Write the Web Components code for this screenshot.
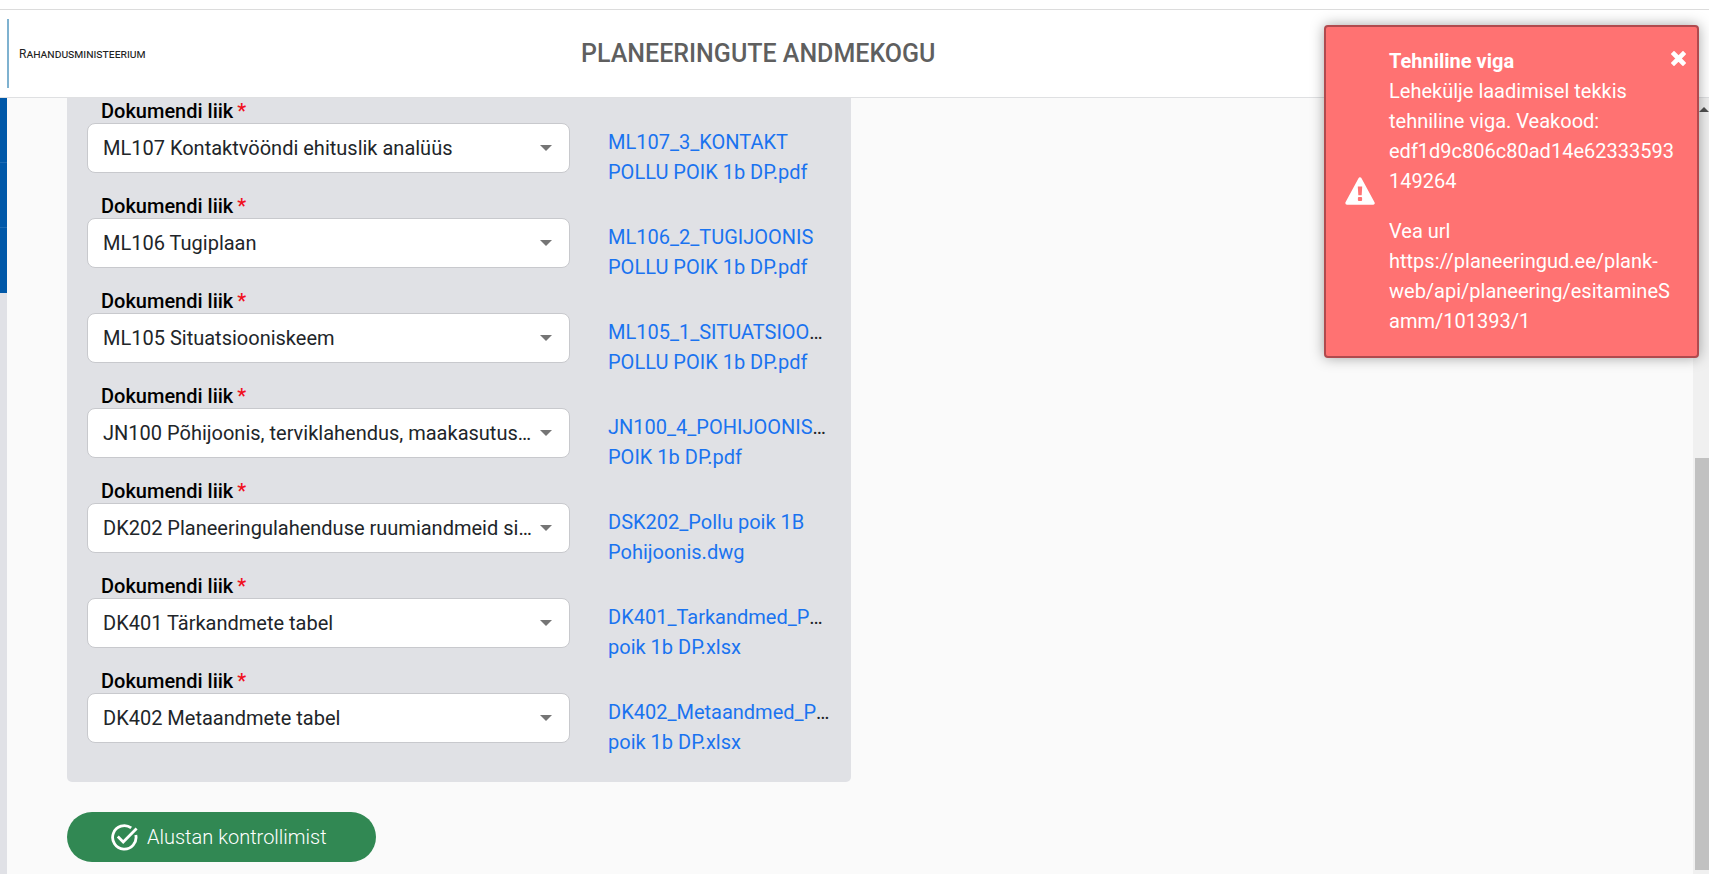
<!DOCTYPE html>
<html lang="et">
<head>
<meta charset="utf-8">
<title>Planeeringute andmekogu</title>
<style>
    html, body {
        height: 100%;
        margin: 0;
    }

    body {
        font: 400 20px/30px Roboto, sans-serif;
        color: #212529;
        background: #fafafa;
        overflow: hidden;
    }
</style>
</head>
<body>
<plank-app>
    <plank-header slot="header" ministry="Rahandusministeerium">Planeeringute andmekogu</plank-header>
    <side-menu slot="menu"></side-menu>
    <document-panel>
        <document-row value="ML107 Kontaktvööndi ehituslik analüüs" file="ML107_3_KONTAKT POLLU POIK 1b DP.pdf"></document-row>
        <document-row value="ML106 Tugiplaan" file="ML106_2_TUGIJOONIS POLLU POIK 1b DP.pdf"></document-row>
        <document-row value="ML105 Situatsiooniskeem" file="ML105_1_SITUATSIOONISKEEM POLLU POIK 1b DP.pdf"></document-row>
        <document-row value="JN100 Põhijoonis, terviklahendus, maakasutusplaan" file="JN100_4_POHIJOONIS_POLLU POIK 1b DP.pdf"></document-row>
        <document-row value="DK202 Planeeringulahenduse ruumiandmeid sisaldav fail" file="DSK202_Pollu poik 1B Pohijoonis.dwg"></document-row>
        <document-row value="DK401 Tärkandmete tabel" file="DK401_Tarkandmed_Pollu poik 1b DP.xlsx"></document-row>
        <document-row value="DK402 Metaandmete tabel" file="DK402_Metaandmed_Pollu poik 1b DP.xlsx"></document-row>
    </document-panel>
    <check-button>Alustan kontrollimist</check-button>
    <scroll-track slot="scroll"></scroll-track>
    <error-toast slot="toast" heading="Tehniline viga">
        <p>Lehekülje laadimisel tekkis tehniline viga. Veakood: edf1d9c806c80ad14e62333593149264</p>
        <p>Vea url<br>https://planeeringud.ee/plank-web/api/planeering/esitamineSamm/101393/1</p>
    </error-toast>
</plank-app>

<script>
class BaseElement extends HTMLElement {
    constructor() {
        super();
        this.shadow = this.attachShadow({ mode: 'open' });
        const template = document.createElement('template');
        template.innerHTML = this.constructor.markup;
        this.shadow.appendChild(template.content.cloneNode(true));
    }
}

class PlankApp extends BaseElement {
    static markup = `
        <style>
            :host {
                display: flex;
                flex-direction: column;
                height: 100vh;
            }

            .body {
                display: flex;
                flex: 1;
                min-height: 0;
            }

            main {
                flex: 1;
                min-width: 0;
                padding: 0 60px;
                overflow: hidden;
            }
        </style>
        <slot name="header"></slot>
        <div class="body">
            <slot name="menu"></slot>
            <main><slot></slot></main>
            <slot name="scroll"></slot>
        </div>
        <slot name="toast"></slot>
    `;
}

class PlankHeader extends BaseElement {
    static markup = `
        <style>
            :host {
                display: block;
                padding-top: 9px;
                background: #fff;
            }

            header {
                display: grid;
                grid-template-columns: 34% 1fr;
                align-items: center;
                height: 87px;
                border-top: 1px solid #dcdcdc;
                border-bottom: 1px solid #dfe0e2;
            }

            .logo {
                display: flex;
                align-items: center;
                height: 69px;
                margin-left: 7px;
                padding-left: 10px;
                border-left: 2px solid #7fb2d0;
                box-sizing: border-box;
                color: #222;
                font-size: 12px;
                font-variant: small-caps;
            }

            h1 {
                margin: 0;
                color: #5f5f5f;
                font-size: 25px;
                font-weight: 500;
                text-transform: uppercase;
            }
        </style>
        <header>
            <div class="logo"></div>
            <h1><slot></slot></h1>
        </header>
    `;

    connectedCallback() {
        this.shadow.querySelector('.logo').textContent = this.getAttribute('ministry');
    }
}

class SideMenu extends BaseElement {
    static markup = `
        <style>
            :host {
                width: 7px;
                background: #e0e1e6;
            }

            .item {
                height: 65px;
                background: #0058a8;
                border-bottom: 1px solid #1c6ab2;
                box-sizing: border-box;
            }

            .item:last-child {
                border-bottom: none;
            }
        </style>
        <div class="item"></div>
        <div class="item"></div>
        <div class="item"></div>
    `;
}

class DocumentPanel extends BaseElement {
    static markup = `
        <style>
            :host {
                display: block;
                max-width: 784px;
                padding: 1px 20px 18px;
                box-sizing: border-box;
                background: #e0e1e5;
                border-radius: 0 0 5px 5px;
            }
        </style>
        <slot></slot>
    `;
}

class DocumentRow extends BaseElement {
    static markup = `
        <style>
            :host {
                display: grid;
                grid-template-columns: minmax(0, 1fr) 223px;
                column-gap: 38px;
                height: 95px;
            }

            label {
                display: block;
                padding-left: 14px;
                color: #000;
                font-weight: 500;
                line-height: 24px;
            }

            label span {
                margin-left: 4px;
                color: #f01020;
            }

            .field {
                display: grid;
                align-items: center;
            }

            select, svg {
                grid-area: 1 / 1;
            }

            select {
                width: 100%;
                height: 50px;
                margin: 0;
                padding: 0 37px 0 15px;
                appearance: none;
                background: #fff;
                border: 1px solid #c8c9cd;
                border-radius: 8px;
                color: #212529;
                font: inherit;
                text-overflow: ellipsis;
            }

            svg {
                justify-self: end;
                width: 12px;
                height: 6px;
                margin-right: 18px;
                pointer-events: none;
            }

            .file {
                padding-top: 28px;
                overflow: hidden;
                text-overflow: ellipsis;
            }

            a {
                color: #1a73f0;
                text-decoration: none;
            }
        </style>
        <div>
            <label for="type">Dokumendi liik<span>*</span></label>
            <div class="field">
                <select id="type" required><option></option></select>
                <svg viewBox="0 0 12 6"><path d="M0 0h12L6 6z" fill="#757575"/></svg>
            </div>
        </div>
        <div class="file"><a href="#"></a></div>
    `;

    connectedCallback() {
        this.shadow.querySelector('option').textContent = this.getAttribute('value');
        this.shadow.querySelector('a').textContent = this.getAttribute('file');
    }
}

class CheckButton extends BaseElement {
    static markup = `
        <style>
            :host {
                display: block;
                margin-top: 30px;
            }

            button {
                display: flex;
                align-items: center;
                gap: 9px;
                height: 50px;
                padding: 0 49px 0 44px;
                background: #318853;
                border: none;
                border-radius: 25px;
                color: #fff;
                font: inherit;
                font-weight: 300;
                cursor: pointer;
            }

            svg {
                width: 27px;
                height: 27px;
            }
        </style>
        <button type="button">
            <svg viewBox="0 0 27 27" fill="none" stroke="#fff" stroke-width="2.8">
                <path d="M20.2 3.9A11.7 11.7 0 1 0 24.8 11"/>
                <path d="M6.8 12.5l5.4 5.4L25.6 4.5"/>
            </svg>
            <slot></slot>
        </button>
    `;
}

class ScrollTrack extends BaseElement {
    static markup = `
        <style>
            :host {
                display: flex;
                flex-direction: column;
                align-items: flex-end;
                width: 16px;
                background: #f0f0f0;
            }

            svg {
                width: 10px;
                height: 5px;
                margin: 9px 0;
            }

            .rest {
                flex: 337;
            }

            .thumb {
                flex: 412;
                width: 14px;
                margin-bottom: 4px;
                background: #c1c1c1;
            }
        </style>
        <svg viewBox="0 0 10 5"><path d="M0 5l5-5 5 5z" fill="#505050"/></svg>
        <div class="rest"></div>
        <div class="thumb"></div>
    `;
}

class ErrorToast extends BaseElement {
    static markup = `
        <style>
            :host {
                position: absolute;
                top: 25px;
                right: 10px;
                display: flex;
                align-items: center;
                gap: 14px;
                width: 375px;
                padding: 19px 20px 20px 19px;
                box-sizing: border-box;
                background: #ff7272;
                border: 2px solid #b04a4e;
                border-radius: 4px;
                box-shadow: 0 0 14px rgba(0, 0, 0, 0.35);
                color: #fff;
            }

            .warning {
                flex: none;
                width: 30px;
                height: 28px;
            }

            .content {
                flex: 1;
                min-width: 0;
                overflow-wrap: anywhere;
            }

            strong {
                display: block;
                font-weight: 700;
            }

            ::slotted(p) {
                margin: 0;
            }

            ::slotted(p:last-child) {
                margin-top: 20px;
            }

            button {
                position: absolute;
                top: 24px;
                right: 11px;
                display: flex;
                padding: 0;
                background: none;
                border: none;
                cursor: pointer;
            }

            button svg {
                width: 15px;
                height: 15px;
            }
        </style>
        <svg class="warning" viewBox="0 0 30 28">
            <path d="M15 2L28 26H2z" fill="#fff" stroke="#fff" stroke-width="3.4" stroke-linejoin="round"/>
            <path d="M12.8 9.5h4.4l-.5 8.7h-3.4z" fill="#ff7272"/>
            <rect x="12.9" y="20" width="4.2" height="4" rx="1" fill="#ff7272"/>
        </svg>
        <div class="content">
            <strong></strong>
            <slot></slot>
        </div>
        <button type="button" aria-label="Sulge">
            <svg viewBox="0 0 15 15"><path d="M3 3l9 9M12 3l-9 9" stroke="#fff" stroke-width="4.6" stroke-linecap="square"/></svg>
        </button>
    `;

    connectedCallback() {
        this.shadow.querySelector('strong').textContent = this.getAttribute('heading');
        this.shadow.querySelector('button').addEventListener('click', () => this.remove());
    }
}

customElements.define('plank-app', PlankApp);
customElements.define('plank-header', PlankHeader);
customElements.define('side-menu', SideMenu);
customElements.define('document-panel', DocumentPanel);
customElements.define('document-row', DocumentRow);
customElements.define('check-button', CheckButton);
customElements.define('scroll-track', ScrollTrack);
customElements.define('error-toast', ErrorToast);
</script>
</body>
</html>
